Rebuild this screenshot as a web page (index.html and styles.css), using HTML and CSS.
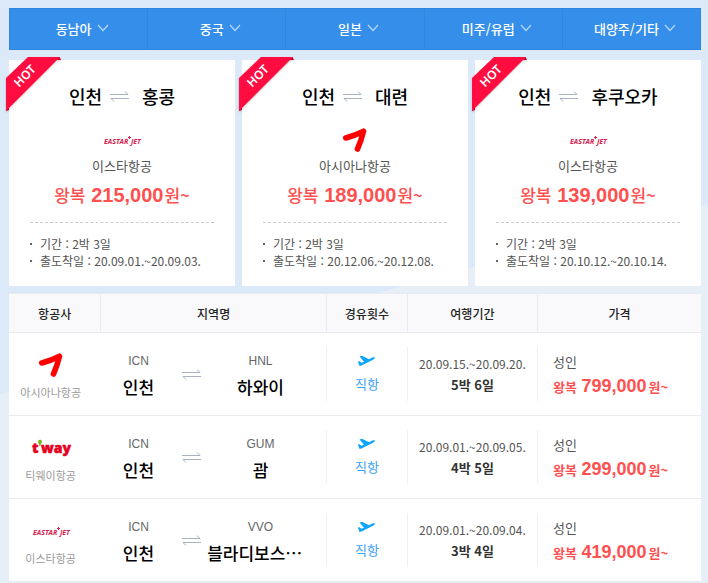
FILE: index.html
```html
<!DOCTYPE html>
<html lang="ko">
<head>
    <meta charset="UTF-8">
    <meta name="viewport" content="width=device-width, initial-scale=1.0">
    <title>특가 항공권</title>
    <link rel="stylesheet" href="styles.css">
</head>
<body>

<!-- shared icons -->
<svg class="defs" width="0" height="0">
    <symbol id="chevron" viewBox="0 0 12 8">
        <path d="M1 1l5 5.5L11 1" fill="none" stroke="#b5d7fa" stroke-width="1.2"/>
    </symbol>
    <symbol id="swap" viewBox="0 0 19 12">
        <path d="M0 4.500h18l-3-3M19 8.500H1l3 3" fill="none" stroke="#a9b3bf" stroke-width="1"/>
    </symbol>
    <symbol id="plane" viewBox="0 0 17 12">
        <path d="M0 6.500L1.500 6.200 3.500 7.800 6 6.800 1.500 1.500 4 .800 11 4.200 14.200 2.600Q16.500 1.700 17 2.600 17 3.800 15 4.800L4 10.300Q2.200 11.200 1.200 10.500Z" fill="#0fa5fb"/>
    </symbol>
    <symbol id="asiana" viewBox="0 0 26 26">
        <path d="M3.800 11Q13 8.500 21.500 4.200Q19.500 13 15.500 22" fill="none" stroke="#f00" stroke-width="5.600" stroke-linecap="round" stroke-linejoin="round"/>
    </symbol>
    <symbol id="ribbon" viewBox="0 0 58 58">
        <path d="M51 0h2.500l1.500 3h-4zM0 50v4l3-1v-4z" fill="#c4002f"/>
        <path d="M22 0h32L0 54V21z" fill="#ff0c40"/>
    </symbol>
</svg>

<div class="container">
    <nav class="region-nav">
        <button type="button">동남아<svg><use href="#chevron"/></svg></button>
        <button type="button">중국<svg><use href="#chevron"/></svg></button>
        <button type="button">일본<svg><use href="#chevron"/></svg></button>
        <button type="button">미주/유럽<svg><use href="#chevron"/></svg></button>
        <button type="button">대양주/기타<svg><use href="#chevron"/></svg></button>
    </nav>

    <div class="cards">
        <div class="card">
            <div class="hot"><svg><use href="#ribbon"/></svg><span>HOT</span></div>
            <h2>인천<svg class="swap"><use href="#swap"/></svg>홍콩</h2>
            <div class="logo">
                <svg class="eastar" viewBox="0 0 38 12">
                    <text x="1" y="10">EASTAR</text>
                    <text x="28" y="10">JET</text>
                    <path d="M26.500 2v3M25 3.500h3"/>
                </svg>
            </div>
            <p class="airline">이스타항공</p>
            <p class="price">왕복 <strong>215,000</strong>원~</p>
            <ul>
                <li>기간 : 2박 3일</li>
                <li>출도착일 : 20.09.01.~20.09.03.</li>
            </ul>
        </div>
        <div class="card">
            <div class="hot"><svg><use href="#ribbon"/></svg><span>HOT</span></div>
            <h2>인천<svg class="swap"><use href="#swap"/></svg>대련</h2>
            <div class="logo"><svg class="asiana"><use href="#asiana"/></svg></div>
            <p class="airline">아시아나항공</p>
            <p class="price">왕복 <strong>189,000</strong>원~</p>
            <ul>
                <li>기간 : 2박 3일</li>
                <li>출도착일 : 20.12.06.~20.12.08.</li>
            </ul>
        </div>
        <div class="card">
            <div class="hot"><svg><use href="#ribbon"/></svg><span>HOT</span></div>
            <h2>인천<svg class="swap"><use href="#swap"/></svg>후쿠오카</h2>
            <div class="logo">
                <svg class="eastar" viewBox="0 0 38 12">
                    <text x="1" y="10">EASTAR</text>
                    <text x="28" y="10">JET</text>
                    <path d="M26.500 2v3M25 3.500h3"/>
                </svg>
            </div>
            <p class="airline">이스타항공</p>
            <p class="price">왕복 <strong>139,000</strong>원~</p>
            <ul>
                <li>기간 : 2박 3일</li>
                <li>출도착일 : 20.10.12.~20.10.14.</li>
            </ul>
        </div>
    </div>

    <table class="flights">
        <thead>
            <tr>
                <th class="col-airline">항공사</th>
                <th class="col-route">지역명</th>
                <th class="col-stop">경유횟수</th>
                <th class="col-date">여행기간</th>
                <th>가격</th>
            </tr>
        </thead>
        <tbody>
            <tr>
                <td>
                    <div class="cell carrier">
                        <div class="logo"><svg class="asiana"><use href="#asiana"/></svg></div>
                        <span>아시아나항공</span>
                    </div>
                </td>
                <td>
                    <div class="cell route">
                        <div><span class="code">ICN</span><strong>인천</strong></div>
                        <svg class="swap"><use href="#swap"/></svg>
                        <div><span class="code">HNL</span><strong>하와이</strong></div>
                    </div>
                </td>
                <td><div class="cell line stop"><svg><use href="#plane"/></svg><span>직항</span></div></td>
                <td><div class="cell line date"><span>20.09.15.~20.09.20.</span><strong>5박 6일</strong></div></td>
                <td><div class="cell line fare"><span>성인</span><p>왕복 <strong>799,000</strong>원~</p></div></td>
            </tr>
            <tr>
                <td>
                    <div class="cell carrier">
                        <div class="logo">
                            <svg class="tway" viewBox="0 0 38 20">
                                <text x="0" y="15">t</text>
                                <path d="M6 3.500a2 2 0 1 1 3.500 1.500Q9 7.500 6.500 8.500 7.500 7 7 6 6 5 6 3.500Z"/>
                                <text x="9" y="15">way</text>
                            </svg>
                        </div>
                        <span>티웨이항공</span>
                    </div>
                </td>
                <td>
                    <div class="cell route">
                        <div><span class="code">ICN</span><strong>인천</strong></div>
                        <svg class="swap"><use href="#swap"/></svg>
                        <div><span class="code">GUM</span><strong>괌</strong></div>
                    </div>
                </td>
                <td><div class="cell line stop"><svg><use href="#plane"/></svg><span>직항</span></div></td>
                <td><div class="cell line date"><span>20.09.01.~20.09.05.</span><strong>4박 5일</strong></div></td>
                <td><div class="cell line fare"><span>성인</span><p>왕복 <strong>299,000</strong>원~</p></div></td>
            </tr>
            <tr>
                <td>
                    <div class="cell carrier">
                        <div class="logo">
                            <svg class="eastar" viewBox="0 0 38 12">
                                <text x="1" y="10">EASTAR</text>
                                <text x="28" y="10">JET</text>
                                <path d="M26.500 2v3M25 3.500h3"/>
                            </svg>
                        </div>
                        <span>이스타항공</span>
                    </div>
                </td>
                <td>
                    <div class="cell route">
                        <div><span class="code">ICN</span><strong>인천</strong></div>
                        <svg class="swap"><use href="#swap"/></svg>
                        <div><span class="code">VVO</span><strong class="long">블라디보스…</strong></div>
                    </div>
                </td>
                <td><div class="cell line stop"><svg><use href="#plane"/></svg><span>직항</span></div></td>
                <td><div class="cell line date"><span>20.09.01.~20.09.04.</span><strong>3박 4일</strong></div></td>
                <td><div class="cell line fare"><span>성인</span><p>왕복 <strong>419,000</strong>원~</p></div></td>
            </tr>
        </tbody>
    </table>
</div>

</body>
</html>
```

FILE: styles.css
```css
* {
    box-sizing: border-box;
}

body {
    margin: 0;
    min-height: 100vh;
    font-family: "Noto Sans CJK KR", sans-serif;
    font-size: 12px;
    color: #555;
    background: linear-gradient(165deg, #dce9f9 51%, #e6eef7 51%);
}

h2, p, ul {
    margin: 0;
    padding: 0;
}

.defs {
    position: absolute;
}

.container {
    padding: 8px 7px 0 9px;
}

/* region menu */
.region-nav {
    display: flex;
    border: 1px solid #2d86e0;
    background-color: #358fea;
}

.region-nav button {
    flex: 1;
    display: flex;
    justify-content: center;
    align-items: center;
    gap: 5px;
    height: 40px;
    padding: 0 0 2px 7px;
    border: none;
    background: none;
    color: #fff;
    font-family: inherit;
    font-size: 13px;
    font-weight: 500;
    cursor: pointer;
}

.region-nav button + button {
    border-left: 1px solid #2d86e0;
}

.region-nav svg {
    width: 12px;
    height: 8px;
}

/* hot deals */
.cards {
    display: grid;
    grid-template-columns: repeat(3, 1fr);
    gap: 7px;
    margin: 10px 0 7px;
}

.card {
    position: relative;
    padding: 23px 21px 16px;
    background-color: #fff;
    text-align: center;
}

.hot {
    position: absolute;
    top: -3px;
    left: -3px;
}

.hot svg {
    display: block;
    width: 58px;
    height: 58px;
    filter: drop-shadow(0 1px 1px rgba(0, 0, 0, 0.2));
}

.hot span {
    position: absolute;
    top: 11px;
    left: 4px;
    width: 30px;
    color: #fff;
    font-family: "Noto Sans", sans-serif;
    font-size: 12px;
    font-weight: 600;
    line-height: 16px;
    transform: rotate(-45deg);
}

.card h2 {
    display: flex;
    justify-content: center;
    align-items: center;
    color: #000;
    font-size: 18px;
    font-weight: 500;
    line-height: 26px;
}

.swap {
    width: 19px;
    height: 12px;
}

.card .swap {
    margin: 0 13px 0 8px;
}

.logo {
    display: flex;
    justify-content: center;
    align-items: center;
}

.card .logo {
    height: 34px;
    margin-top: 14px;
}

.asiana {
    width: 26px;
    height: 26px;
}

.eastar {
    width: 38px;
    height: 12px;
    overflow: visible;
    font-family: "Open Sans", sans-serif;
    font-size: 7px;
    font-weight: 700;
    font-style: italic;
    fill: #d6224f;
}

.eastar path {
    stroke: #d6224f;
}

.tway {
    width: 38px;
    height: 20px;
    overflow: visible;
    font-family: "Open Sans", sans-serif;
    font-size: 14px;
    font-weight: 800;
    fill: #e6001f;
}

.tway text {
    stroke: #e6001f;
    stroke-width: 0.5;
}

.tway path {
    fill: #7ab51d;
}

.airline {
    font-size: 13px;
    line-height: 18px;
}

.price {
    margin-top: 6px;
    color: #ff5050;
    font-size: 17px;
    font-weight: 500;
    line-height: 28px;
}

.price strong {
    margin: 0 1px;
    font-family: "Liberation Sans", sans-serif;
    font-size: 20px;
}

.card ul {
    margin-top: 13px;
    padding-top: 12px;
    border-top: 1px dashed #ccc;
    list-style: none;
    text-align: left;
}

.card li {
    display: flex;
    align-items: center;
    gap: 8px;
    line-height: 17px;
}

.card li:last-child {
    padding-bottom: 1px;
}

.card li::before {
    content: "";
    width: 2px;
    height: 2px;
    background-color: #666;
}

/* flight list */
.flights {
    width: 100%;
    table-layout: fixed;
    border-collapse: separate;
    border-spacing: 0;
    background-color: #fff;
}

.flights th {
    height: 40px;
    padding: 0;
    border-top: 1px solid #e9ebee;
    border-bottom: 1px solid #e9ebee;
    background-color: #f9f9fb;
    color: #222;
    font-size: 12px;
    font-weight: 500;
}

.flights th + th {
    border-left: 1px solid #e9ebee;
}

.col-airline {
    width: 13.2%;
}

.col-route {
    width: 32.6%;
}

.col-stop {
    width: 11.7%;
}

.col-date {
    width: 18.8%;
}

.flights td {
    padding: 14px 0;
    border-bottom: 1px solid #e9ebee;
}

.cell {
    display: flex;
    flex-direction: column;
    justify-content: center;
    align-items: center;
    height: 54px;
}

.line {
    border-left: 1px solid #edf1f5;
}

.carrier {
    padding-right: 8px;
    color: #999;
    font-size: 11px;
    line-height: 18px;
}

.carrier .logo {
    height: 36px;
}

.route {
    display: grid;
    grid-template-columns: 5fr 2fr 7fr;
    justify-items: center;
    padding-right: 12px;
    text-align: center;
}

.route div {
    width: 100%;
}

.route span,
.route strong {
    display: block;
    line-height: 25px;
}

.route strong {
    color: #000;
    font-size: 17px;
    font-weight: 500;
    white-space: nowrap;
}

.route .long {
    text-align: left;
}

.code {
    color: #666;
    font-family: "Liberation Sans", sans-serif;
}

.stop {
    gap: 7px;
    color: #3d9ff5;
    font-size: 13px;
    line-height: 20px;
}

.stop svg {
    width: 17px;
    height: 12px;
}

.date {
    line-height: 21px;
}

.date strong {
    color: #333;
    font-size: 13px;
}

.fare {
    align-items: flex-start;
    padding-left: 15px;
    font-size: 13px;
    line-height: 24px;
}

.fare p {
    color: #ff5050;
    font-weight: 700;
}

.fare p strong {
    margin: 0 2px 0 1px;
    font-family: "Liberation Sans", sans-serif;
    font-size: 18px;
}
```
